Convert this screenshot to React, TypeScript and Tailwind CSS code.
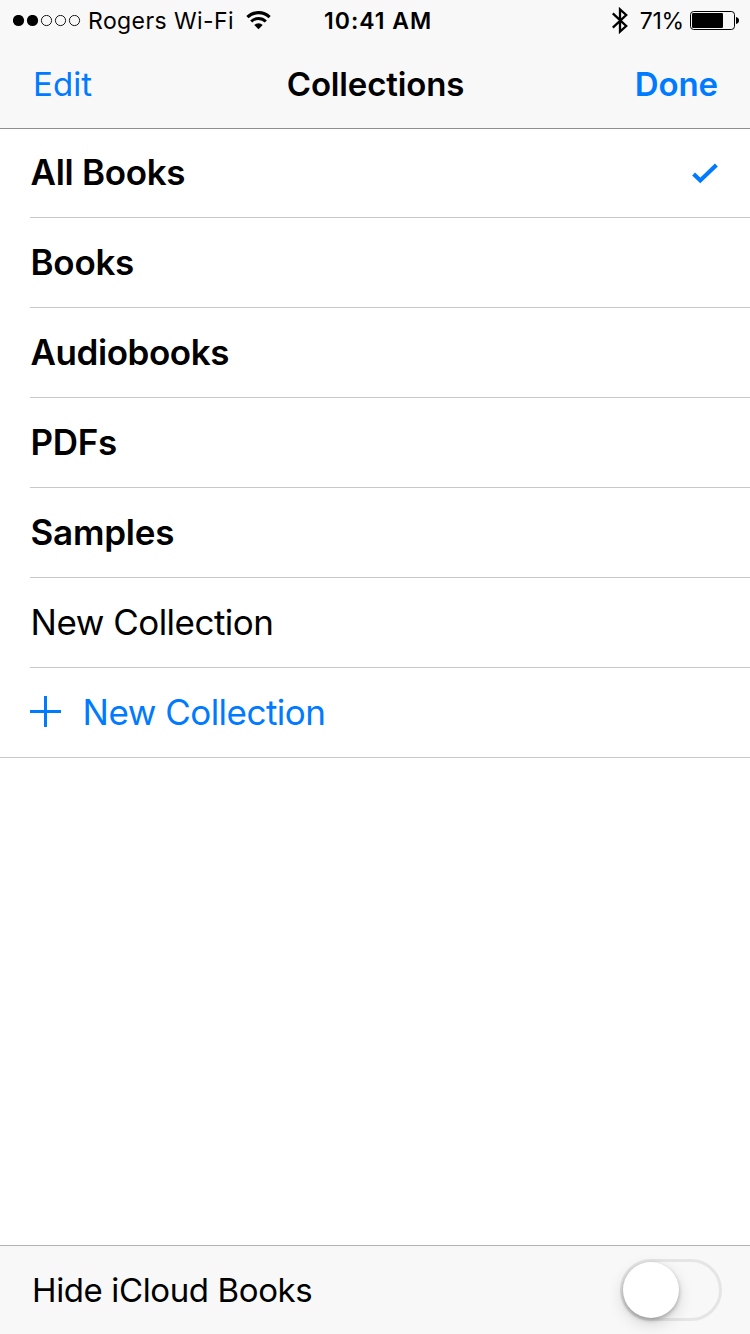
import { useState } from "react";

interface Collection {
  name: string;
  builtIn: boolean;
  tracking: string;
}

const collections: Collection[] = [
  { name: "All Books", builtIn: true, tracking: "tracking-[-0.32px]" },
  { name: "Books", builtIn: true, tracking: "tracking-[-0.3px]" },
  { name: "Audiobooks", builtIn: true, tracking: "tracking-[-0.45px]" },
  { name: "PDFs", builtIn: true, tracking: "tracking-[-0.3px]" },
  { name: "Samples", builtIn: true, tracking: "tracking-[-0.25px]" },
  { name: "New Collection", builtIn: false, tracking: "tracking-[-0.52px]" },
];

function SignalDots() {
  return (
    <svg width="68" height="12" viewBox="0 0 68 12" className="shrink-0">
      {[0, 1, 2, 3, 4].map((i) => (
        <circle
          key={i}
          cx={5.5 + i * 14}
          cy={5.5}
          r={i < 2 ? 5.6 : 5.1}
          fill={i < 2 ? "black" : "none"}
          stroke={i < 2 ? "none" : "black"}
          strokeWidth={0.9}
        />
      ))}
    </svg>
  );
}

function WifiIcon() {
  return (
    <svg width="25" height="19" viewBox="0 0 25 19" fill="none" stroke="black" className="shrink-0">
      <path d="M1.4 6.2 A16 16 0 0 1 23.6 6.2" strokeWidth="3.2" />
      <path d="M5.2 10.5 A10.3 10.3 0 0 1 19.8 10.5" strokeWidth="3" />
      <path d="M12.5 18.2 L8.3 13.9 A5.9 5.9 0 0 1 16.7 13.9 Z" fill="black" stroke="none" />
    </svg>
  );
}

function BluetoothIcon() {
  return (
    <svg width="16" height="27" viewBox="0 0 16 27" fill="none" stroke="black" strokeWidth="2.3" className="shrink-0">
      <path d="M0.8 6.3 L14.2 19 L8 24.6 V2.4 L14.2 8 L0.8 20.7" />
    </svg>
  );
}

function BatteryIcon() {
  return (
    <svg width="49" height="19" viewBox="0 0 49 19" className="shrink-0">
      <rect x="0.5" y="0.5" width="44" height="18" rx="3.2" fill="none" stroke="black" />
      <rect x="2" y="2" width="31" height="15" rx="1.2" />
      <path d="M46 6 C48 6.4 49 7.8 49 9.5 C49 11.2 48 12.6 46 13 Z" />
    </svg>
  );
}

function StatusBar() {
  return (
    <div className="flex h-[41px] items-center pl-[13px] pr-[11px] text-[23px] leading-none">
      <div className="flex w-[311px] items-center">
        <SignalDots />
        <span className="ml-[7px] pt-[2px] tracking-[0.42px]">Rogers Wi-Fi</span>
        <span className="ml-[12px]">
          <WifiIcon />
        </span>
      </div>
      <span className="pt-[2px] font-semibold tracking-[1px]">10:41 AM</span>
      <div className="ml-auto flex items-center">
        <BluetoothIcon />
        <span className="ml-[12px] mr-[6px] pt-[2px] tracking-[-0.2px]">71%</span>
        <BatteryIcon />
      </div>
    </div>
  );
}

export default function App() {
  const [selected, setSelected] = useState(0);
  const [hideCloud, setHideCloud] = useState(false);

  return (
    <div className="flex h-[1334px] w-[750px] flex-col bg-white font-['Inter',sans-serif] text-black">
      <header className="h-[129px] border-b border-[#8e8e93] bg-[#f8f8f8]">
        <StatusBar />
        <nav className="flex h-[87px] items-center justify-between pl-[33px] pr-[32px] text-[33px] leading-none">
          <button className="w-[120px] text-left tracking-[0.1px] text-[#007aff]">Edit</button>
          <h1 className="font-semibold tracking-[-0.15px]">Collections</h1>
          <button className="w-[120px] text-right font-semibold tracking-[-0.1px] text-[#007aff]">Done</button>
        </nav>
      </header>

      <main className="flex-1">
        <ul className="-mt-px pl-[30px]">
          {collections.map((item, i) => (
            <li
              key={i}
              onClick={() => setSelected(i)}
              className="flex h-[90px] items-center justify-between border-b border-[#c8c7cc] pl-[0.6px] pr-[32px] text-[35px] leading-none"
            >
              <span className={`${item.builtIn ? "font-semibold" : "font-normal"} ${item.tracking}`}>{item.name}</span>
              {selected === i && (
                <svg width="26" height="21" viewBox="0 0 26 21" fill="none" stroke="#007aff" strokeWidth="4.2" className="mt-[2px]">
                  <path d="M1.6 11 L8.3 17.4 L24.4 2" />
                </svg>
              )}
            </li>
          ))}
        </ul>
        <button className="flex h-[90px] w-full items-center border-b border-[#c8c7cc] pl-[30px] text-[35px] leading-none text-[#007aff]">
          <svg width="31" height="31" viewBox="0 0 31 31" stroke="currentColor" strokeWidth="3" className="mb-[2px]">
            <path d="M0 15.5 H31 M15.5 0 V31" />
          </svg>
          <span className="ml-[21.6px] tracking-[-0.52px]">New Collection</span>
        </button>
      </main>

      <footer className="flex h-[89px] items-center justify-between border-t border-[#b2b2b2] bg-[#f8f8f8] pl-[32px] pr-[28px]">
        <span className="text-[33px] leading-none tracking-[-0.38px]">Hide iCloud Books</span>
        <button
          role="switch"
          aria-checked={hideCloud}
          aria-label="Hide iCloud Books"
          onClick={() => setHideCloud(!hideCloud)}
          className={`flex h-[62px] w-[102px] items-center rounded-full border-[3px] ${
            hideCloud ? "justify-end border-[#4cd964] bg-[#4cd964]" : "border-[#e5e5e5]"
          }`}
        >
          <span className="h-[56px] w-[56px] rounded-full bg-white shadow-[0_6px_16px_rgba(0,0,0,0.15),0_2px_4px_rgba(0,0,0,0.28)]" />
        </button>
      </footer>
    </div>
  );
}
